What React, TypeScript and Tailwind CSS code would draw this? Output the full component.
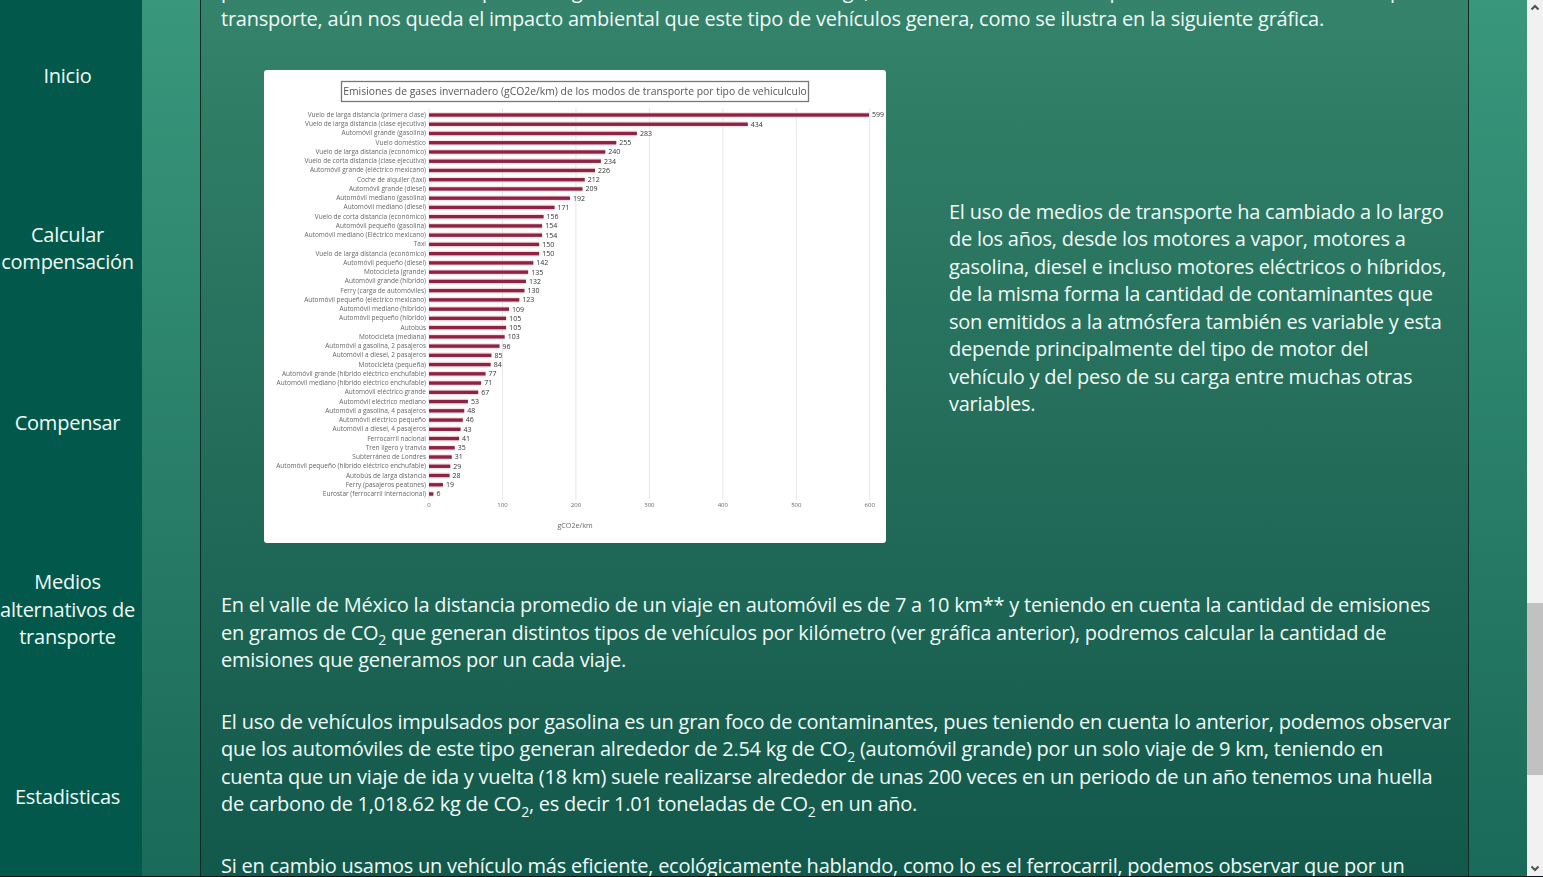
const rows: [string, number][] = [
  ["Vuelo de larga distancia (primera clase)", 599],
  ["Vuelo de larga distancia (clase ejecutiva)", 434],
  ["Automóvil grande (gasolina)", 283],
  ["Vuelo doméstico", 255],
  ["Vuelo de larga distancia (económico)", 240],
  ["Vuelo de corta distancia (clase ejecutiva)", 234],
  ["Automóvil grande (eléctrico mexicano)", 226],
  ["Coche de alquiler (taxi)", 212],
  ["Automóvil grande (diesel)", 209],
  ["Automóvil mediano (gasolina)", 192],
  ["Automóvil mediano (diesel)", 171],
  ["Vuelo de corta distancia (económico)", 156],
  ["Automóvil pequeño (gasolina)", 154],
  ["Automóvil mediano (Eléctrico mexicano)", 154],
  ["Taxi", 150],
  ["Vuelo de larga distancia (económico)", 150],
  ["Automóvil pequeño (diesel)", 142],
  ["Motocicleta (grande)", 135],
  ["Automóvil grande (híbrido)", 132],
  ["Ferry (carga de automóviles)", 130],
  ["Automóvil pequeño (eléctrico mexicano)", 123],
  ["Automóvil mediano (híbrido)", 109],
  ["Automóvil pequeño (híbrido)", 105],
  ["Autobús", 105],
  ["Motocicleta (mediana)", 103],
  ["Automóvil a gasolina, 2 pasajeros", 96],
  ["Automóvil a diesel, 2 pasajeros", 85],
  ["Motocicleta (pequeña)", 84],
  ["Automóvil grande (híbrido eléctrico enchufable)", 77],
  ["Automóvil mediano (híbrido eléctrico enchufable)", 71],
  ["Automóvil eléctrico grande", 67],
  ["Automóvil eléctrico mediano", 53],
  ["Automóvil a gasolina, 4 pasajeros", 48],
  ["Automóvil eléctrico pequeño", 46],
  ["Automóvil a diesel, 4 pasajeros", 43],
  ["Ferrocarril nacional", 41],
  ["Tren ligero y tranvía", 35],
  ["Subterráneo de Londres", 31],
  ["Automóvil pequeño (híbrido eléctrico enchufable)", 29],
  ["Autobús de larga distancia", 28],
  ["Ferry (pasajeros peatones)", 19],
  ["Eurostar (ferrocarril internacional)", 6],
];

function Chart() {
  const x0 = 165;
  const k = 0.7346;
  const y0 = 45;
  const step = 9.244;
  return (
    <svg width="622" height="472" viewBox="0 0 622 472" className="block tracking-normal" style={{ fontFamily: "'Open Sans', sans-serif" }}>
      <rect x="77.5" y="11.5" width="467" height="20" fill="#fff" stroke="#777" strokeWidth="1.3" />
      <text x="311" y="24.5" textAnchor="middle" fontSize="10.36" fill="#555">
        Emisiones de gases invernadero (gCO2e/km) de los modos de transporte por tipo de vehiculculo
      </text>
      {[0, 100, 200, 300, 400, 500, 600].map((t) => (
        <g key={t}>
          <line x1={x0 + t * k} x2={x0 + t * k} y1="38" y2="430" stroke="#e6e6e6" strokeWidth="1" />
          <text x={x0 + t * k} y="437" textAnchor="middle" fontSize="6" fill="#666">{t}</text>
        </g>
      ))}
      <text x="311" y="458" textAnchor="middle" fontSize="7.2" fill="#666">gCO2e/km</text>
      {rows.map(([label, v], i) => {
        const y = y0 + i * step;
        return (
          <g key={label + i}>
            <rect x={x0} y={y - 3} width={v * k} height="6" fill="#f4c9d3" opacity="0.55" />
            <rect x={x0} y={y - 1.7} width={v * k} height="3.4" fill="#8e2443" />
            <text x={x0 - 3} y={y + 2} textAnchor="end" fontSize="6.5" fill="#666">{label}</text>
            <text x={x0 + v * k + 3} y={y + 2.4} fontSize="7" fill="#333">{v}</text>
          </g>
        );
      })}
    </svg>
  );
}

function Sub() {
  return <sub className="text-[14px] leading-[0] align-[-2px]">2</sub>;
}

export default function App() {
  return (
    <div className="h-[877px] w-[1543px] overflow-hidden flex bg-[#05131a] text-[#f0fbf7] text-[20px] leading-[27.5px] font-['Open_Sans',sans-serif] tracking-[-0.24px]">
      <div className="flex-1 min-w-0 flex h-[876px] overflow-hidden">
        <nav className="w-[142px] shrink-0 bg-[#02594b] pr-[7px] flex flex-col items-center text-center">
          <div className="mt-[62px]">Inicio</div>
          <div className="mt-[131px]">Calcular<br />compensación</div>
          <div className="mt-[133px]">Compensar</div>
          <div className="mt-[132px]">Medios<br />alternativos de<br />transporte</div>
          <div className="mt-[132px]">Estadisticas</div>
        </nav>
        <div className="flex-1 min-w-0 bg-linear-to-b from-[#39977b] to-[#1a6a59] px-[58px]">
          <main className="h-full border-x border-[#0a2a24] bg-linear-to-b from-[#34836a] to-[#12584b] px-[20px] overflow-hidden">
            <p className="-mt-[23px] whitespace-nowrap">
              pese a los altos costos de su precio en gasolina o en el coste de la larga, además del alto coste del precio del combustible de un tipo de
            </p>
            <p className="whitespace-nowrap">transporte, aún nos queda el impacto ambiental que este tipo de vehículos genera, como se ilustra en la siguiente gráfica.</p>
            <div className="flex items-center mt-[38px]">
              <div className="ml-[43px] w-[622px] h-[473px] shrink-0 bg-white rounded-[3px] overflow-hidden blur-[0.35px]">
                <Chart />
              </div>
              <p className="ml-[63px] w-[505px] mt-[2px]">
                El uso de medios de transporte ha cambiado a lo largo de los años, desde los motores a vapor, motores a gasolina, diesel e incluso motores eléctricos o híbridos, de la misma forma la cantidad de contaminantes que son emitidos a la atmósfera también es variable y esta depende principalmente del tipo de motor del vehículo y del peso de su carga entre muchas otras variables.
              </p>
            </div>
            <p className="mt-[48px]">
              En el valle de México la distancia promedio de un viaje en automóvil es de 7 a 10 km** y teniendo en cuenta la cantidad de emisiones en gramos de CO<Sub /> que generan distintos tipos de vehículos por kilómetro (ver gráfica anterior), podremos calcular la cantidad de emisiones que generamos por un cada viaje.
            </p>
            <p className="mt-[34px] whitespace-nowrap">
              El uso de vehículos impulsados por gasolina es un gran foco de contaminantes, pues teniendo en cuenta lo anterior, podemos observar
              <br />
              que los automóviles de este tipo generan alrededor de 2.54 kg de CO<Sub /> (automóvil grande) por un solo viaje de 9 km, teniendo en
              <br />
              cuenta que un viaje de ida y vuelta (18 km) suele realizarse alrededor de unas 200 veces en un periodo de un año tenemos una huella
              <br />
              de carbono de 1,018.62 kg de CO<Sub />, es decir 1.01 toneladas de CO<Sub /> en un año.
            </p>
            <p className="mt-[34px]">
              Si en cambio usamos un vehículo más eficiente, ecológicamente hablando, como lo es el ferrocarril, podemos observar que por un
            </p>
          </main>
        </div>
        <div className="w-[16px] shrink-0 bg-[#f1f1f1] flex flex-col items-center">
          <svg width="16" height="16" viewBox="0 0 16 16" className="block shrink-0"><path d="M4.5 9.5 8 6l3.5 3.5" fill="none" stroke="#505050" strokeWidth="2" /></svg>
          <div className="mt-[587px] w-full h-[172px] shrink-0 bg-[#c1c1c1]" />
          <svg width="16" height="16" viewBox="0 0 16 16" className="block shrink-0 mt-auto"><path d="M4.5 6.5 8 10l3.5-3.5" fill="none" stroke="#505050" strokeWidth="2" /></svg>
        </div>
      </div>
    </div>
  );
}
